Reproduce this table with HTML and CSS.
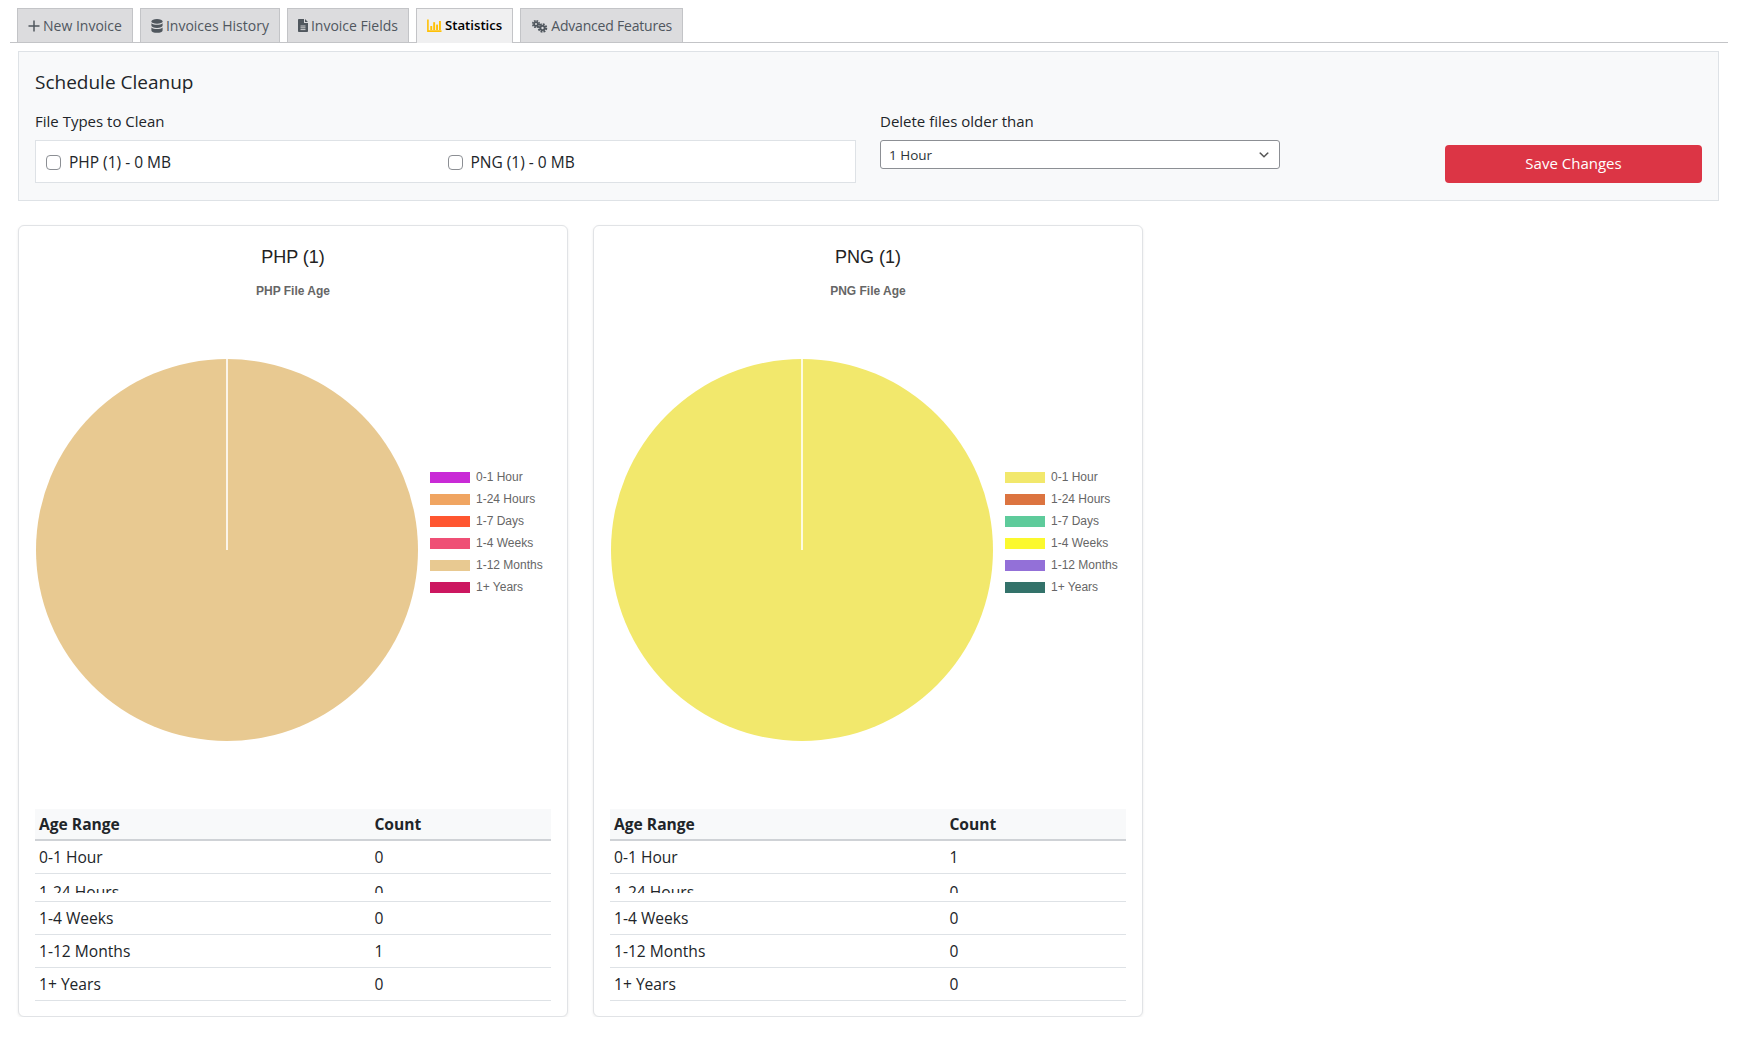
FILE: index.html
```html
<!DOCTYPE html>
<html lang="en">
<head>
<meta charset="utf-8">
<title>Statistics</title>
<link rel="stylesheet" href="styles.css">
</head>
<body>
<div class="page">
  <nav class="tabs">
    <a class="tab">
      <svg class="ico" width="12" height="12" viewBox="0 0 12 12"><path d="M6 0.5V11.5M0.5 6H11.5" stroke="#50575e" stroke-width="1.5" fill="none"/></svg>
      New Invoice
    </a>
    <a class="tab">
      <svg class="ico" width="12" height="14" viewBox="0 0 12 14"><g fill="#50575e"><ellipse cx="6" cy="2.4" rx="5.6" ry="2.3"/><path d="M0.4 4.2V6.6C0.4 7.9 2.9 9 6 9S11.6 7.9 11.6 6.6V4.2C10.4 5.2 8.3 5.8 6 5.8S1.6 5.2 0.4 4.2Z"/><path d="M0.4 8.4V11.4C0.4 12.7 2.9 13.8 6 13.8S11.6 12.7 11.6 11.4V8.4C10.4 9.4 8.3 10.1 6 10.1S1.6 9.4 0.4 8.4Z"/></g></svg>
      Invoices History
    </a>
    <a class="tab">
      <svg class="ico" width="10" height="13" viewBox="0 0 10 13"><path d="M0 0.8C0 0.4 0.4 0 0.8 0H6V3.4C6 3.8 6.2 4 6.6 4H10V12.2C10 12.6 9.6 13 9.2 13H0.8C0.4 13 0 12.6 0 12.2Z M7 0L10 3H7Z" fill="#50575e"/><path d="M2.5 7H7.5M2.5 8.8H7.5M2.5 10.6H7.5" stroke="#dcdcde" stroke-width="0.9"/></svg>
      Invoice Fields
    </a>
    <a class="tab tab-active">
      <svg class="ico" width="15" height="13" viewBox="0 0 15 13"><path d="M0.9 0.5V12.1H14.5" stroke="#ffc107" stroke-width="1.6" fill="none"/><g fill="#ffc107"><rect x="3.3" y="7" width="1.9" height="4"/><rect x="6.2" y="3.2" width="1.9" height="7.8"/><rect x="9.1" y="5.6" width="1.9" height="5.4"/><rect x="12" y="2" width="1.9" height="9"/></g></svg>
      Statistics
    </a>
    <a class="tab tab-tight">
      <svg class="ico" width="17" height="14" viewBox="0 0 17 14"><g fill="none" stroke="#50575e"><circle cx="5" cy="5" r="3.1" stroke-width="2" stroke-dasharray="1.6 0.85"/><circle cx="11.5" cy="9" r="3.6" stroke-width="2.3" stroke-dasharray="1.8 1"/></g><g fill="#50575e"><circle cx="5" cy="5" r="2.6"/><circle cx="11.5" cy="9" r="3"/></g><g fill="#dcdcde"><circle cx="5" cy="5" r="1"/><circle cx="11.5" cy="9" r="1.2"/></g></svg>
      Advanced Features
    </a>
  </nav>

  <section class="cleanup">
    <h4 class="cleanup-title">Schedule Cleanup</h4>
    <div class="cleanup-grid">
      <div class="field">
        <div class="field-label">File Types to Clean</div>
        <div class="types-box">
          <label class="type"><input type="checkbox" class="check"><span>PHP (1) - 0 MB</span></label>
          <label class="type"><input type="checkbox" class="check"><span>PNG (1) - 0 MB</span></label>
        </div>
      </div>
      <div class="field">
        <div class="field-label">Delete files older than</div>
        <div class="select">
          <span>1 Hour</span>
          <svg width="14" height="14" viewBox="0 0 20 20"><path d="M5 6l5 5 5-5 2 1-7 7-7-7 2-1z" fill="#555"/></svg>
        </div>
      </div>
      <div class="field field-action">
        <button class="btn-save" type="button">Save Changes</button>
      </div>
    </div>
  </section>

  <div class="cards">
    <div class="card">
      <h5 class="card-title">PHP (1)</h5>
      <div class="chart-title">PHP File Age</div>
      <div class="chart">
        <svg class="pie" width="384" height="384" viewBox="0 0 384 384">
          <circle cx="192" cy="192" r="191" fill="#e8c991"/>
          <line x1="192" y1="192" x2="192" y2="1" stroke="#fff" stroke-width="1.6"/>
        </svg>
        <ul class="legend">
          <li><i class="sw" style="background:#c92ad6"></i>0-1 Hour</li>
          <li><i class="sw" style="background:#f0a562"></i>1-24 Hours</li>
          <li><i class="sw" style="background:#ff5630"></i>1-7 Days</li>
          <li><i class="sw" style="background:#ef4f75"></i>1-4 Weeks</li>
          <li><i class="sw" style="background:#e8c991"></i>1-12 Months</li>
          <li><i class="sw" style="background:#cc1760"></i>1+ Years</li>
        </ul>
      </div>
      <table class="age-table">
        <thead><tr><th class="c1">Age Range</th><th>Count</th></tr></thead>
        <tbody>
          <tr><td>0-1 Hour</td><td>0</td></tr>
          <tr class="cut"><td><div class="clip">1-24 Hours</div></td><td><div class="clip">0</div></td></tr>
          <tr><td>1-4 Weeks</td><td>0</td></tr>
          <tr><td>1-12 Months</td><td>1</td></tr>
          <tr><td>1+ Years</td><td>0</td></tr>
        </tbody>
      </table>
    </div>

    <div class="card">
      <h5 class="card-title">PNG (1)</h5>
      <div class="chart-title">PNG File Age</div>
      <div class="chart">
        <svg class="pie" width="384" height="384" viewBox="0 0 384 384">
          <circle cx="192" cy="192" r="191" fill="#f2e86c"/>
          <line x1="192" y1="192" x2="192" y2="1" stroke="#fff" stroke-width="1.6"/>
        </svg>
        <ul class="legend">
          <li><i class="sw" style="background:#f2e86c"></i>0-1 Hour</li>
          <li><i class="sw" style="background:#dc7440"></i>1-24 Hours</li>
          <li><i class="sw" style="background:#5ecb9b"></i>1-7 Days</li>
          <li><i class="sw" style="background:#fbf92e"></i>1-4 Weeks</li>
          <li><i class="sw" style="background:#9370d8"></i>1-12 Months</li>
          <li><i class="sw" style="background:#33726a"></i>1+ Years</li>
        </ul>
      </div>
      <table class="age-table">
        <thead><tr><th class="c1">Age Range</th><th>Count</th></tr></thead>
        <tbody>
          <tr><td>0-1 Hour</td><td>1</td></tr>
          <tr class="cut"><td><div class="clip">1-24 Hours</div></td><td><div class="clip">0</div></td></tr>
          <tr><td>1-4 Weeks</td><td>0</td></tr>
          <tr><td>1-12 Months</td><td>0</td></tr>
          <tr><td>1+ Years</td><td>0</td></tr>
        </tbody>
      </table>
    </div>
  </div>
</div>
</body>
</html>
```

FILE: styles.css
```css
* { box-sizing: border-box; }

body {
  margin: 0;
  background: #fff;
  font-family: "Open Sans", "Noto Sans", sans-serif;
  color: #212529;
}

.page {
  padding-top: 8px;
}

/* Tabs */
.tabs {
  display: flex;
  gap: 7px;
  margin: 0 11px 0 10px;
  padding-left: 7px;
  border-bottom: 1px solid #c3c4c7;
}

.tab {
  display: flex;
  align-items: center;
  gap: 3px;
  padding: 4px 10px 4px;
  font-size: 14px;
  font-weight: 400;
  line-height: 25px;
  color: #50575e;
  background: #dcdcde;
  border: 1px solid #c3c4c7;
  border-bottom: none;
  white-space: nowrap;
}

.tab .ico { flex: none; }

.tab-tight {
  letter-spacing: -0.2px;
}

.tab-active {
  background: #f0f0f1;
  color: #000;
  font-size: 13.2px;
  font-weight: 600;
  margin-bottom: -1px;
  padding-bottom: 5px;
}

/* Cleanup panel */
.cleanup {
  margin: 8px 20px 0 18px;
  padding: 18px 16px 17px;
  background: #f8f9fa;
  border: 1px solid #dee2e6;
}

.cleanup-title {
  margin: 0 0 15px;
  font-size: 19px;
  font-weight: 400;
  line-height: 24px;
  color: #212529;
}

.cleanup-grid {
  display: grid;
  grid-template-columns: 821px 400px 1fr;
  column-gap: 24px;
  align-items: start;
}

.field-label {
  font-size: 15px;
  line-height: 24px;
  margin-bottom: 7px;
}

.types-box {
  display: grid;
  grid-template-columns: 1fr 1fr;
  align-items: center;
  height: 43px;
  padding: 0 6px 0 10px;
  background: #fff;
  border: 1px solid #dee2e6;
}

.type {
  display: flex;
  align-items: center;
  gap: 8px;
  font-size: 15.5px;
  color: #212529;
  padding-top: 1px;
}

.check {
  appearance: none;
  -webkit-appearance: none;
  width: 15px;
  height: 15px;
  margin: 0;
  border: 1px solid #8c8f94;
  border-radius: 4px;
  background: #fff;
  flex: none;
}

.select {
  display: flex;
  align-items: center;
  justify-content: space-between;
  height: 29px;
  margin-top: 1px;
  padding: 0 8px;
  background: #fff;
  border: 1px solid #8c8f94;
  border-radius: 3px;
  font-size: 13.5px;
  color: #2c3338;
}

.field-action {
  align-self: end;
  display: flex;
  justify-content: flex-end;
}

.btn-save {
  width: 257px;
  height: 38px;
  border: none;
  border-radius: 4px;
  background: #dc3545;
  color: #fff;
  font-family: inherit;
  font-size: 15px;
  padding: 0 0 2px;
  cursor: pointer;
}

/* Cards */
.cards {
  display: flex;
  gap: 25px;
  margin: 24px 0 0 18px;
}

.card {
  width: 550px;
  padding: 17px 16px 15px;
  background: #fff;
  border: 1px solid #e1e3e6;
  border-radius: 6px;
  box-shadow: 0 1px 3px rgba(0, 0, 0, 0.08);
}

.card-title {
  margin: 0;
  text-align: center;
  font-family: "Liberation Sans", Arial, sans-serif;
  font-size: 18px;
  font-weight: 400;
  line-height: 28px;
  color: #222;
}

.chart-title {
  margin-top: 13px;
  text-align: center;
  font-family: "Liberation Sans", Arial, sans-serif;
  font-size: 12px;
  font-weight: 700;
  line-height: 14px;
  color: #666;
}

.chart {
  display: flex;
  align-items: flex-start;
  height: 503px;
}

.pie {
  display: block;
  flex: none;
  margin-top: 60px;
}

.legend {
  list-style: none;
  margin: 173px 0 0 11px;
  padding: 0;
  display: flex;
  flex-direction: column;
  gap: 10px;
  font-family: "Liberation Sans", Arial, sans-serif;
  font-size: 12px;
  line-height: 12px;
  color: #666;
}

.legend li {
  display: flex;
  align-items: center;
  gap: 6px;
  white-space: nowrap;
}

.sw {
  display: block;
  width: 40px;
  height: 11px;
}

/* Table */
.age-table {
  width: 100%;
  margin-top: 8px;
  border-collapse: collapse;
  font-size: 15.6px;
  color: #212529;
}

.age-table th {
  text-align: left;
  font-weight: 700;
  padding: 3px 4px;
  line-height: 24px;
  background: #f8f9fa;
  border-bottom: 2px solid #cfd2d6;
}

.age-table th.c1 { width: 65%; }

.age-table td {
  padding: 4px 4px;
  line-height: 24px;
  border-bottom: 1px solid #dee2e6;
}

.age-table tr.cut td {
  padding: 6px 4px 8px;
}

.clip {
  height: 13px;
  overflow: hidden;
}
```
